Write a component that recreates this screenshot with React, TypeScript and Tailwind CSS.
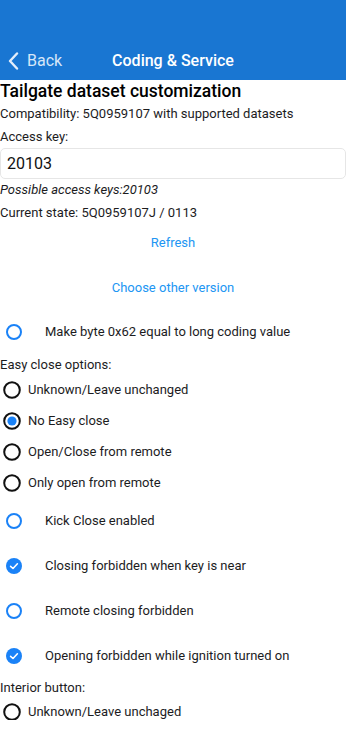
import React from "react";

const font = { fontFamily: "Roboto, 'Noto Sans', sans-serif" };

function CheckCircle({ checked }: { checked: boolean }) {
  return checked ? (
    <svg width="16" height="16" viewBox="0 0 16 16">
      <circle cx="8" cy="8" r="8" fill="#1a82f7" />
      <path d="M4.6 8.3 L7 10.5 L11.4 5.8" fill="none" stroke="#fff" strokeWidth="1.6" strokeLinecap="round" strokeLinejoin="round" />
    </svg>
  ) : (
    <svg width="16" height="16" viewBox="0 0 16 16">
      <circle cx="8" cy="8" r="7" fill="none" stroke="#1a82f7" strokeWidth="2" />
    </svg>
  );
}

function Radio({ checked }: { checked: boolean }) {
  return (
    <svg width="18" height="18" viewBox="0 0 18 18">
      <circle cx="9" cy="9" r="7.8" fill="none" stroke="#111" strokeWidth="2" />
      {checked && <circle cx="9" cy="9" r="4.6" fill="#1a82f7" />}
    </svg>
  );
}

function CheckRow({ label, checked, h }: { label: string; checked: boolean; h: string }) {
  return (
    <div className={`flex items-center shrink-0 ${h}`}>
      <div className="w-[45px] pl-[6px] flex items-center">
        <CheckCircle checked={checked} />
      </div>
      <span className="text-[13px] text-[#1c1c1e]">{label}</span>
    </div>
  );
}

function RadioRow({ label, checked }: { label: string; checked: boolean }) {
  return (
    <div className="flex items-center h-[31px] shrink-0">
      <div className="w-[28px] pl-[3px] flex items-center">
        <Radio checked={checked} />
      </div>
      <span className="text-[13px] text-[#1c1c1e]">{label}</span>
    </div>
  );
}

export default function App() {
  return (
    <div style={font} className="w-[346px] h-[750px] bg-white overflow-hidden">
      <div className="h-[720px] overflow-hidden flex flex-col">
        <div className="h-[80px] bg-[#1976d2] flex flex-col justify-end shrink-0">
          <div className="h-[38px] relative flex items-center justify-center">
            <div className="absolute left-[8px] top-0 h-full flex items-center gap-[8px]">
              <svg width="11" height="18" viewBox="0 0 11 18">
                <path d="M9 1.5 L2 9 L9 16.5" fill="none" stroke="#e3eefb" strokeWidth="2.4" strokeLinecap="round" strokeLinejoin="round" />
              </svg>
              <span className="text-[16px] text-[#d6e6f8]">Back</span>
            </div>
            <span className="text-[16px] font-medium text-white">Coding &amp; Service</span>
          </div>
        </div>
        <div className="h-[22px] flex items-center shrink-0">
          <span className="text-[17.5px] font-medium text-black leading-[22px]">Tailgate dataset customization</span>
        </div>
        <div className="h-[23px] flex items-center text-[13px] text-[#1c1c1e] shrink-0">
          Compatibility: 5Q0959107 with supported datasets
        </div>
        <div className="h-[23px] flex items-center text-[13px] text-[#1c1c1e] shrink-0">Access key:</div>
        <div className="h-[31px] border border-[#e6e6e6] rounded-[5px] flex items-center px-[6px] shrink-0">
          <span className="text-[16px] text-[#111]">20103</span>
        </div>
        <div className="h-[22px] flex items-center text-[13px] italic text-[#1c1c1e] shrink-0">
          Possible access keys:20103
        </div>
        <div className="h-[23px] flex items-center text-[13px] text-[#1c1c1e] shrink-0">
          Current state: 5Q0959107J / 0113
        </div>
        <div className="h-[38px] flex items-center justify-center text-[13px] text-[#2196f3] shrink-0">Refresh</div>
        <div className="h-[52px] flex items-center justify-center text-[13px] text-[#2196f3] shrink-0">
          Choose other version
        </div>
        <CheckRow label="Make byte 0x62 equal to long coding value" checked={false} h="h-[36px]" />
        <div className="h-[24px] pt-[6px] leading-[18px] text-[13px] text-[#1c1c1e] shrink-0">Easy close options:</div>
        <RadioRow label="Unknown/Leave unchanged" checked={false} />
        <RadioRow label="No Easy close" checked={true} />
        <RadioRow label="Open/Close from remote" checked={false} />
        <RadioRow label="Only open from remote" checked={false} />
        <CheckRow label="Kick Close enabled" checked={false} h="h-[45px]" />
        <CheckRow label="Closing forbidden when key is near" checked={true} h="h-[45px]" />
        <CheckRow label="Remote closing forbidden" checked={false} h="h-[45px]" />
        <CheckRow label="Opening forbidden while ignition turned on" checked={true} h="h-[45px]" />
        <div className="h-[18px] pt-[2px] flex items-center text-[13px] text-[#1c1c1e] shrink-0">Interior button:</div>
        <RadioRow label="Unknown/Leave unchaged" checked={false} />
      </div>
    </div>
  );
}
